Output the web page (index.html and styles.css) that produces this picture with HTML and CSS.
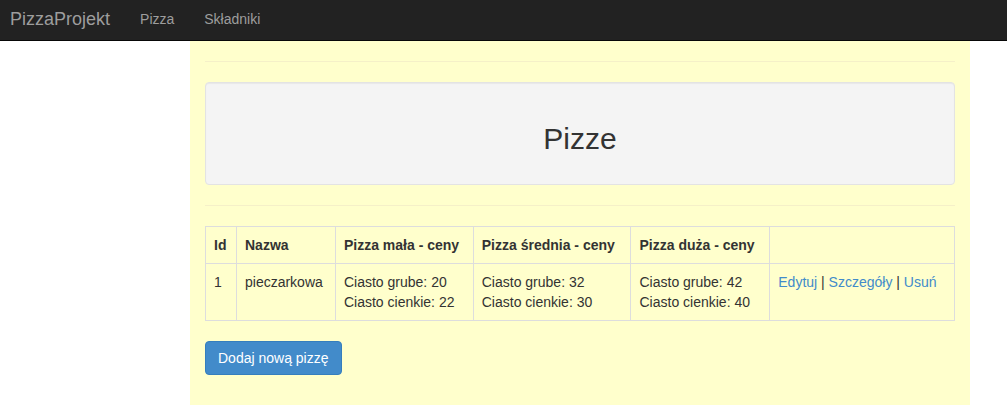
FILE: index.html
```html
<!DOCTYPE html>
<html lang="pl">
<head>
<meta charset="utf-8">
<title>Pizze</title>
<link rel="stylesheet" href="styles.css">
</head>
<body>
<nav class="navbar">
  <a class="brand" href="#">PizzaProjekt</a>
  <ul class="nav">
    <li><a href="#">Pizza</a></li>
    <li><a href="#">Składniki</a></li>
  </ul>
</nav>
<main class="body-content">
  <hr class="rule">
  <div class="well">
    <h2 class="title">Pizze</h2>
  </div>
  <hr class="rule">
  <table class="table">
    <colgroup>
      <col class="c-id">
      <col class="c-name">
      <col class="c-small">
      <col class="c-medium">
      <col class="c-large">
      <col class="c-actions">
    </colgroup>
    <thead>
      <tr>
        <th>Id</th>
        <th>Nazwa</th>
        <th>Pizza mała - ceny</th>
        <th>Pizza średnia - ceny</th>
        <th>Pizza duża - ceny</th>
        <th></th>
      </tr>
    </thead>
    <tbody>
      <tr>
        <td>1</td>
        <td>pieczarkowa</td>
        <td>Ciasto grube: 20<br>Ciasto cienkie: 22</td>
        <td>Ciasto grube: 32<br>Ciasto cienkie: 30</td>
        <td>Ciasto grube: 42<br>Ciasto cienkie: 40</td>
        <td><a href="#">Edytuj</a> | <a href="#">Szczegóły</a> | <a href="#">Usuń</a></td>
      </tr>
    </tbody>
  </table>
  <a class="btn" href="#">Dodaj nową pizzę</a>
</main>
</body>
</html>
```
FILE: styles.css
```css
* { box-sizing: border-box; }
html, body { margin: 0; padding: 0; }
body {
  font-family: "Liberation Sans", Arial, Helvetica, sans-serif;
  font-size: 14px;
  line-height: 20px;
  color: #333;
  background: #fff;
}
a { color: #428bca; text-decoration: none; }

.navbar {
  display: flex;
  align-items: center;
  height: 41px;
  background: #222;
  border-bottom: 1px solid #080808;
}
.brand {
  color: #9d9d9d;
  font-size: 18px;
  line-height: 20px;
  padding: 0 15px 0 10px;
  margin-top: -2px;
}
.nav {
  display: flex;
  list-style: none;
  margin: 0;
  padding: 0;
}
.nav a {
  display: block;
  color: #9d9d9d;
  padding: 0 15px;
  line-height: 20px;
  margin-top: -3px;
}

.body-content {
  width: 780px;
  margin-left: 190px;
  background: #ffffcc;
  padding: 20px 15px 30px;
}
.rule {
  margin: 0 0 20px;
  border: 0;
  border-top: 1px solid #f5f0c8;
}
.well {
  background: #f4f4f4;
  border: 1px solid #e3e3e3;
  border-radius: 4px;
  box-shadow: inset 0 1px 1px rgba(0,0,0,.05);
  padding: 19px;
  margin-bottom: 20px;
  text-align: center;
}
.title {
  margin: 20px 0 10px;
  font-size: 30px;
  font-weight: 500;
  line-height: 33px;
}

.table {
  width: 100%;
  border-collapse: collapse;
  border-spacing: 0;
  margin-bottom: 20px;
}
.table th, .table td {
  border: 1px solid #ddd;
  padding: 8px;
  text-align: left;
  vertical-align: top;
  line-height: 20px;
}
.table th { font-weight: bold; }
.c-id { width: 31px; }
.c-name { width: 99px; }
.c-small { width: 138px; }
.c-medium { width: 158px; }
.c-large { width: 139px; }
.c-actions { width: 185px; }

.btn {
  display: inline-block;
  padding: 6px 12px;
  font-size: 14px;
  line-height: 20px;
  color: #fff;
  background: #428bca;
  border: 1px solid #357ebd;
  border-radius: 4px;
}
```
